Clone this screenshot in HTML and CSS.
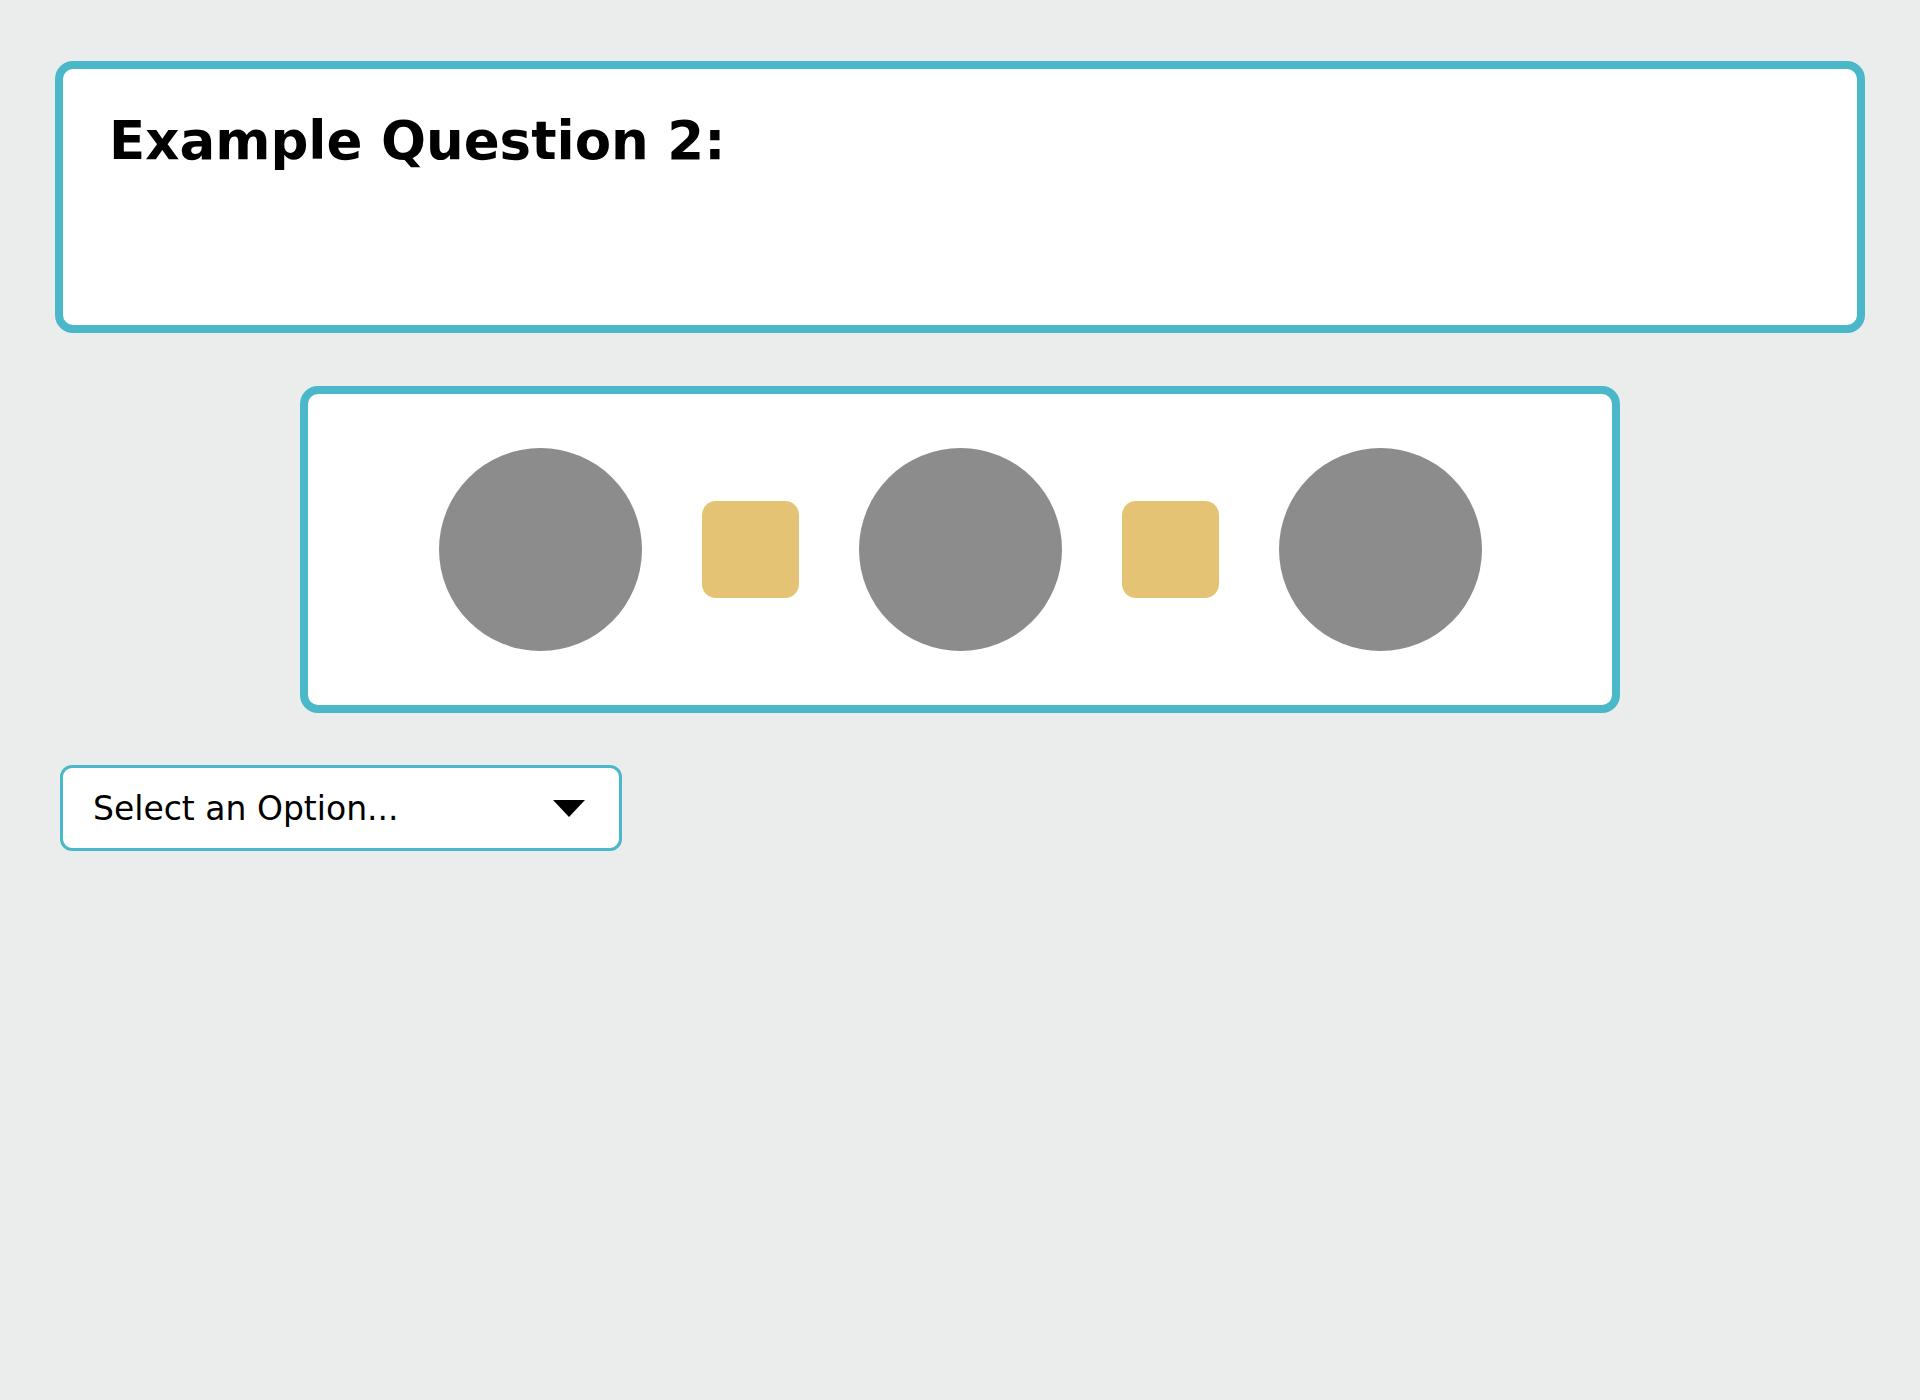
FILE: index.html
```html
<!DOCTYPE html>
<html>
<head>
<title>Example Question 2</title>
<meta charset="UTF-8">
<link rel="stylesheet" href="styles.css">
</head>
<body>

<div class="questionBox">
  <h2 class="questionTitle">Example Question 2:</h2>
</div>

<div class="shapeBox">
  <div class="shapeRow">
    <span class="circle"></span>
    <span class="square"></span>
    <span class="circle"></span>
    <span class="square"></span>
    <span class="circle"></span>
  </div>
</div>

<div class="selectBox">
  <span class="selectTxt">Select an Option...</span>
  <span class="selectArrow"></span>
</div>

</body>
</html>
```
FILE: styles.css
```css
html, body {
  margin: 0;
  padding: 0;
  background-color: #ebecec;
  font-family: "DejaVu Sans", "Open Sans", sans-serif;
  color: #000;
}

body {
  padding: 61px 55px 0 55px;
}

.questionBox {
  background-color: #fff;
  border: 8px solid #4bb8c9;
  border-radius: 18px;
  height: 272px;
  box-sizing: border-box;
  padding: 0 46px;
}

.questionTitle {
  margin: 0;
  padding-top: 40px;
  font-size: 53px;
  font-weight: 700;
  line-height: 64px;
}

.shapeBox {
  width: 1320px;
  height: 327px;
  box-sizing: border-box;
  margin: 53px auto 0 auto;
  background-color: #fff;
  border: 8px solid #4bb8c9;
  border-radius: 18px;
  display: flex;
  align-items: center;
  justify-content: center;
}

.shapeRow {
  display: flex;
  align-items: center;
  gap: 60px;
}

.circle {
  width: 203px;
  height: 203px;
  border-radius: 50%;
  background-color: #8c8c8c;
}

.square {
  width: 97px;
  height: 97px;
  border-radius: 14px;
  background-color: #e4c474;
}

.selectBox {
  width: 562px;
  height: 86px;
  box-sizing: border-box;
  margin: 52px 0 0 5px;
  background-color: #fff;
  border: 3px solid #4bb8c9;
  border-radius: 12px;
  display: flex;
  align-items: center;
  justify-content: space-between;
  padding: 0 34px 0 30px;
}

.selectTxt {
  font-size: 33px;
  font-weight: 400;
}

.selectArrow {
  width: 0;
  height: 0;
  border-left: 16px solid transparent;
  border-right: 16px solid transparent;
  border-top: 17px solid #000;
}
```
